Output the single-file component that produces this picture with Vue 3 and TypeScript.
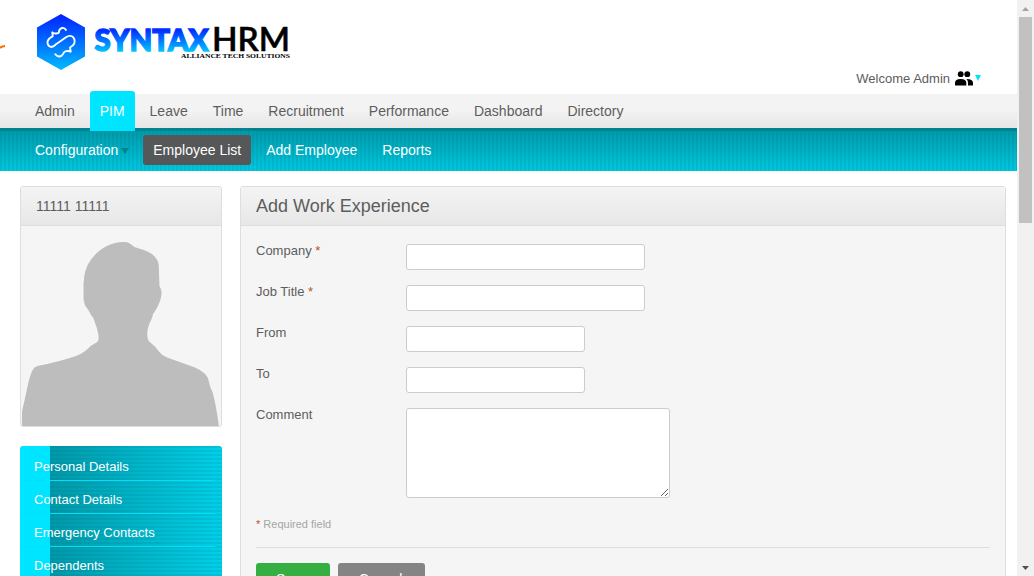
<script setup lang="ts">
interface Field {
  label: string
  required: boolean
  kind: 'wide' | 'date' | 'area'
}

const modules: string[] = ['Admin', 'PIM', 'Leave', 'Time', 'Recruitment', 'Performance', 'Dashboard', 'Directory']
const pages: string[] = ['Configuration', 'Employee List', 'Add Employee', 'Reports']
const sections: string[] = ['Personal Details', 'Contact Details', 'Emergency Contacts', 'Dependents']
const fields: Field[] = [
  { label: 'Company', required: true, kind: 'wide' },
  { label: 'Job Title', required: true, kind: 'wide' },
  { label: 'From', required: false, kind: 'date' },
  { label: 'To', required: false, kind: 'date' },
  { label: 'Comment', required: false, kind: 'area' },
]
</script>

<template>
  <div class="window">
    <div class="page">
      <header class="header">
        <svg class="logo" width="300" height="80" viewBox="0 0 300 80">
          <defs>
            <linearGradient id="hex" x1="0" y1="0" x2="0" y2="1">
              <stop offset="0.05" stop-color="#0028ff" />
              <stop offset="1" stop-color="#00bcff" />
            </linearGradient>
            <linearGradient id="word" gradientUnits="userSpaceOnUse" x1="0" y1="28" x2="0" y2="52">
              <stop offset="0.1" stop-color="#0030ff" />
              <stop offset="1" stop-color="#00c8ff" />
            </linearGradient>
          </defs>
          <path d="M0 48 Q2 46 5 46" fill="none" stroke="#ff6a00" stroke-width="2.200" />
          <path d="M61 14 L85 27.5 V56.5 L61 70 L37 56.5 V27.5 Z" fill="url(#hex)" />
          <path
            d="M66 30 Q64.500 27.300 62 28 Q59.200 29 59 31.500 Q59 33.500 57.300 33.300 Q54 34 52.300 32.300 L52.700 36.300 Q48 38.500 47.500 42 Q47.500 46.500 51.500 47 Q54 46.800 56.700 43.700 Q61 41 66 37.300 Q69.500 34.800 72.700 36.800 Q75.500 39.500 74.300 43.500 Q73 46 70 47.500 L70.700 51.700 Q68 50.500 65.300 51.300 Q63.700 51.800 63.300 53.800 Q61.500 56.700 59 56.500 Q56.700 56.300 55.300 54.300"
            fill="none" stroke="#fff" stroke-width="1.900" stroke-linecap="round" stroke-linejoin="round"
          />
          <text class="word-bold" x="94.500" y="50.500" textLength="114" lengthAdjust="spacingAndGlyphs" fill="url(#word)" stroke="url(#word)">SYNTAX</text>
          <text class="word-thin" x="212" y="51" textLength="78" lengthAdjust="spacingAndGlyphs">HRM</text>
          <text class="tagline" x="181" y="58.300" textLength="109" lengthAdjust="spacingAndGlyphs">ALLIANCE TECH SOLUTIONS</text>
        </svg>
        <div class="welcome">
          <span>Welcome Admin</span>
          <svg class="people" width="18" height="15" viewBox="0 0 18 15">
            <circle cx="5.700" cy="3.200" r="2.900" /><circle cx="12.300" cy="3.200" r="2.900" />
            <path d="M0 14.500 V12 Q0 8 5.700 8 Q11.300 8 11.300 12 V14.500 Z" />
            <path d="M11.500 8 Q18 8 18 12 V14.500 H13 V12 Q13 9.500 11.500 8 Z" />
          </svg>
          <i class="tri cyan"></i>
        </div>
      </header>

      <nav class="modules">
        <a v-for="m in modules" :key="m" :class="{ active: m === 'PIM' }">{{ m }}</a>
      </nav>
      <nav class="pages">
        <a v-for="p in pages" :key="p" :class="{ active: p === 'Employee List' }">{{ p }}<i v-if="p === 'Configuration'" class="tri dark"></i></a>
      </nav>

      <main class="body">
        <aside>
          <section class="panel profile">
            <h2>11111 11111</h2>
            <svg class="photo" width="200" height="201" viewBox="21 226 200 201">
              <path
                fill="#bdbdbd"
                d="M22 427 V411.700 L27 389 Q30 374 33 369.500 Q34 367 37.500 366 Q62 361 76.700 355.700 Q84 353 91 345.700 L96.500 342.500 Q98.500 341.500 98.500 339 V335 Q97 327 93.300 318 Q91 315.500 88.300 310 Q83.700 305 83.500 298 V284 Q84 268 91.500 259 Q104 242.500 123.500 242 Q128 241.500 130.500 244 Q133.500 247.300 139 248.500 Q157 253 158.700 265 L159.500 286 Q162 290 161.500 294 Q161 301 155.700 310 Q153 313 152 318 Q147.500 327 147.300 332 V336 Q147.300 340.500 151 343 Q155 346 158.500 351 Q162 355.500 166.500 357.300 L195 367.500 Q208 373 209 382 Q209.500 386 212.500 392 Q216 404 219 427 Z"
              />
            </svg>
          </section>
          <ul class="side">
            <li v-for="s in sections" :key="s"><span>{{ s }}</span></li>
          </ul>
        </aside>

        <section class="panel content">
          <h1>Add Work Experience</h1>
          <form class="form">
            <div v-for="f in fields" :key="f.label" class="row">
              <label>{{ f.label }} <em v-if="f.required">*</em></label>
              <textarea v-if="f.kind === 'area'"></textarea>
              <input v-else type="text" :class="f.kind" />
            </div>
            <p class="note"><em>*</em> Required field</p>
            <div class="actions">
              <button type="button" class="save">Save</button>
              <button type="button" class="cancel">Cancel</button>
            </div>
          </form>
        </section>
      </main>
    </div>

    <div class="scrollbar">
      <svg width="17" height="17" viewBox="0 0 17 17"><path d="M5 11 L8.500 7 L12 11 Z" fill="#a3a3a3" /></svg>
      <div class="thumb"></div>
      <svg width="17" height="17" viewBox="0 0 17 17"><path d="M5 7 H12 L8.500 11 Z" fill="#505050" /></svg>
    </div>
  </div>
</template>

<style>
body {
  margin: 0;
  overflow: hidden;
}
</style>

<style scoped>
* {
  box-sizing: border-box;
}
.window {
  display: flex;
  width: 1034px;
  height: 576px;
  overflow: hidden;
  background: #fff;
  color: #5d5d5d;
  font-family: "Liberation Sans", Arial, sans-serif;
}
.page {
  width: 1017px;
  height: 576px;
  overflow: hidden;
}
.header {
  display: flex;
  justify-content: space-between;
  height: 94px;
}
.logo {
  display: block;
}
.word-bold {
  font: 900 31px Lato, sans-serif;
  stroke-width: 1.5px;
}
.word-thin {
  font: 600 32px Lato, sans-serif;
  stroke: #000;
  stroke-width: 0.5px;
}
.tagline {
  font: bold 7px "Liberation Serif", serif;
}
.welcome {
  display: flex;
  align-items: center;
  height: 16px;
  margin: 70px 36px 0 0;
  font-size: 13px;
}
.people {
  margin-left: 5px;
}
.tri {
  display: inline-block;
  border: 0 solid transparent;
}
.cyan {
  border-width: 6px 3px 0;
  border-top-color: #00e5ff;
  margin-left: 2px;
}
.dark {
  border-width: 6px 4px 0;
  border-top-color: #00838f;
  margin: 0 -1px 0 3px;
  vertical-align: 1px;
}
.modules {
  display: flex;
  gap: 5px;
  height: 34px;
  padding-left: 25px;
  background: linear-gradient(#f3f3f3 45%, #e6e6e6);
  font-size: 14px;
}
.modules a {
  height: 34px;
  padding: 0 10px;
  line-height: 34px;
}
.modules .active {
  position: relative;
  height: 40px;
  margin-top: -3px;
  line-height: 40px;
  border-radius: 3px 3px 0 0;
  background: #00e5ff;
  color: #fff;
}
.pages {
  display: flex;
  align-items: flex-start;
  gap: 5px;
  height: 43px;
  padding: 4px 0 0 25px;
  border-top: 3px solid #00838f;
  background:
    repeating-linear-gradient(90deg, rgba(0, 100, 115, 0.13) 0 2px, transparent 2px 4px),
    linear-gradient(#009bab, #00c8e0);
  color: #fff;
  font-size: 14px;
}
.pages a {
  height: 30px;
  padding: 0 10px;
  border-radius: 3px;
  line-height: 30px;
  white-space: nowrap;
}
.pages .active {
  background: #555759;
}
.body {
  display: flex;
  gap: 18px;
  padding: 15px 11px 0 20px;
}
.panel {
  border: 1px solid #dedede;
  border-radius: 3px;
  background: #f5f5f5;
}
.panel h1,
.panel h2 {
  height: 39px;
  margin: 0;
  padding: 0 15px;
  border-bottom: 1px solid #dedede;
  background: linear-gradient(#f4f4f4, #e7e7e7);
  line-height: 38px;
  font-weight: normal;
}
.panel h1 {
  font-size: 18px;
}
.panel h2 {
  font-size: 14px;
}
.profile {
  width: 202px;
  height: 241px;
  overflow: hidden;
}
.photo {
  display: block;
}
.side {
  width: 202px;
  margin: 19px 0 0;
  padding: 2px 0;
  list-style: none;
  border-radius: 3px;
  color: #fff;
  font-size: 13px;
  background:
    linear-gradient(#00e5ff, #00e5ff) 0 0 / 30px 100% no-repeat,
    repeating-linear-gradient(rgba(0, 100, 115, 0.12) 0 2px, transparent 2px 4px),
    linear-gradient(90deg, #0098a8 30px, #00d0e8);
}
.side li {
  height: 33px;
  padding-right: 7px;
}
.side span {
  display: block;
  height: 33px;
  padding-left: 14px;
  border-bottom: 1px solid #00e0fa;
  line-height: 37px;
}
.content {
  flex: 1;
  height: 460px;
}
.form {
  padding: 18px 15px 0;
}
.row {
  display: flex;
  align-items: flex-start;
  margin-bottom: 15px;
}
.row label {
  width: 150px;
  font-size: 13px;
  line-height: 14px;
}
em {
  color: #b4521e;
  font-style: normal;
}
input,
textarea {
  display: block;
  height: 26px;
  margin: 0;
  border: 1px solid #ccc;
  border-radius: 3px;
  background: #fff;
}
.wide {
  width: 239px;
}
.date {
  width: 179px;
}
textarea {
  width: 264px;
  height: 90px;
}
.note {
  margin: 20px 0 0;
  color: #a5a5a5;
  font-size: 11px;
  line-height: 12px;
}
.actions {
  display: flex;
  gap: 8px;
  margin-top: 17px;
  padding-top: 15px;
  border-top: 1px solid #dedede;
}
button {
  height: 33px;
  padding: 0 2px 0 0;
  border: 0;
  border-radius: 3px;
  color: #fff;
  font: 14px/33px "Liberation Sans", Arial, sans-serif;
}
.save {
  width: 74px;
  background: #35af41;
}
.cancel {
  width: 87px;
  background: #848484;
}
.scrollbar {
  display: flex;
  flex-direction: column;
  width: 17px;
  background: #f1f1f1;
}
.scrollbar svg {
  display: block;
}
.thumb {
  width: 13px;
  height: 206px;
  margin: 0 auto auto;
  background: #c1c1c1;
}
</style>
